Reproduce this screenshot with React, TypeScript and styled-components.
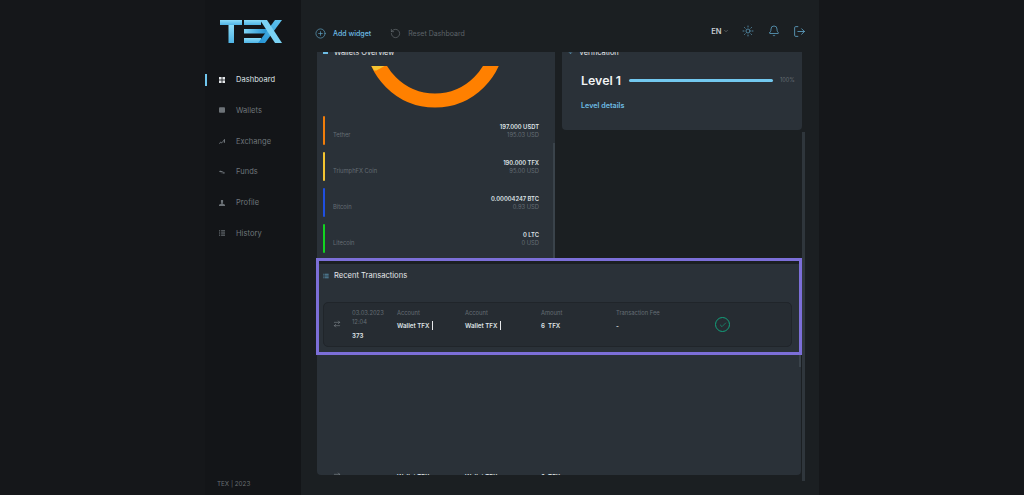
import React from 'react';
import styled, { createGlobalStyle } from 'styled-components';
import { Bell, ChevronDown, CirclePlus, LogOut, RotateCcw, Sun, List, ArrowRightLeft, Check, ChevronsDown } from 'lucide-react';

const GlobalStyle = createGlobalStyle`
  html, body { margin: 0; padding: 0; background: #15171a; }
  body { font-family: Inter, "Liberation Sans", sans-serif; overflow: hidden; }
  * { box-sizing: border-box; }
`;

const Page = styled.div`
  width: 1024px;
  height: 495px;
  padding-left: 205px;
  display: flex;
  background: #15171a;
  overflow: hidden;
`;

const Sidebar = styled.aside`
  width: 96px;
  height: 495px;
  display: flex;
  flex-direction: column;
  background: #131518;
`;

const LogoWrap = styled.div`
  height: 73.5px;
  padding: 20px 0 0 15px;
`;

const Nav = styled.nav`
  display: flex;
  flex-direction: column;
`;

const NavItem = styled.div<{ $active?: boolean }>`
  height: 12px;
  margin-bottom: 18.8px;
  padding-left: 12px;
  display: flex;
  align-items: center;
  gap: 11px;
  font-size: 7.5px;
  letter-spacing: 0.05px;
  color: ${({ $active }) => ($active ? '#dfe3e6' : '#6f757b')};
  border-left: 2px solid ${({ $active }) => ($active ? '#6fc6ee' : 'transparent')};
`;

const NavGlyph = styled.svg<{ $active?: boolean }>`
  width: 6px;
  height: 6px;
  flex: none;
  fill: ${({ $active }) => ($active ? '#e4e7ea' : '#6d7378')};
`;

const Copyright = styled.div`
  margin-top: auto;
  padding: 0 0 7px 12px;
  font-size: 6.3px;
  line-height: 8px;
  color: #686e73;
`;

const Main = styled.main`
  position: relative;
  width: 518px;
  height: 495px;
  display: flex;
  flex-direction: column;
  background: #1b1f22;
`;

const TopBar = styled.header`
  height: 52px;
  flex: none;
  padding: 14px 13px 0 14px;
  display: flex;
  align-items: center;
`;

const TopAction = styled.div<{ $muted?: boolean }>`
  display: flex;
  align-items: center;
  gap: 7px;
  margin-right: 19px;
  font-size: 7px;
  font-weight: ${({ $muted }) => ($muted ? 400 : 500)};
  color: ${({ $muted }) => ($muted ? '#5d6369' : '#6dbce4')};
  svg { color: ${({ $muted }) => ($muted ? '#6a7075' : '#62a9cd')}; }
`;

const TopRight = styled.div`
  margin-left: auto;
  display: flex;
  align-items: center;
  gap: 13.5px;
  padding-bottom: 4px;
  svg { color: #62a9cd; }
`;

const Lang = styled.div`
  display: flex;
  align-items: center;
  gap: 1px;
  font-size: 7.6px;
  font-weight: 600;
  color: #c8cdd1;
  svg { color: #8a9095; }
`;

const Viewport = styled.div`
  width: 485px;
  height: 423px;
  margin-left: 16px;
  flex: none;
  display: flex;
  flex-direction: column;
  overflow: hidden;
`;

const Columns = styled.div`
  display: flex;
  align-items: flex-start;
  gap: 7px;
`;

const Panel = styled.section<{ $width: number; $height: number; $bottomRadius?: boolean }>`
  position: relative;
  width: ${({ $width }) => $width}px;
  height: ${({ $height }) => $height}px;
  flex: none;
  padding: 0 6px;
  background: #2a3138;
  overflow: hidden;
  border-radius: ${({ $bottomRadius }) => ($bottomRadius ? '0 0 4px 4px' : '0')};
`;

const ClippedTitle = styled.div`
  display: flex;
  align-items: center;
  gap: 6px;
  height: 10px;
  margin-top: -5px;
  font-size: 7.4px;
  color: #e8eaec;
  svg { color: #6dbce4; flex: none; }
`;

const TitleMark = styled.span`
  width: 5px;
  height: 3px;
  flex: none;
  margin-top: 1px;
  background: #6dbce4;
`;

const ChartWrap = styled.div`
  margin: 9px 0 8px 41.5px;
  height: 42px;
`;

const WalletList = styled.div`
  display: flex;
  flex-direction: column;
  gap: 7px;
`;

const WalletRow = styled.div`
  height: 29px;
  display: flex;
  align-items: flex-start;
  padding-right: 10px;
`;

const Accent = styled.span<{ $color: string }>`
  width: 2px;
  height: 29px;
  flex: none;
  border-radius: 1px;
  margin-right: 8px;
  background: ${({ $color }) => $color};
`;

const WalletName = styled.div`
  margin-top: 15px;
  font-size: 5.8px;
  line-height: 8px;
  color: #656d74;
`;

const WalletValues = styled.div`
  margin-left: auto;
  padding-top: 6.5px;
  text-align: right;
  font-size: 5.8px;
  line-height: 8.5px;
  color: #656d74;
`;

const WalletAmount = styled.div`
  font-weight: 600;
  color: #dfe3e6;
`;

const PanelScrollbar = styled.span`
  position: absolute;
  right: 0;
  top: 91px;
  bottom: 0;
  width: 2px;
  background: #3a434b;
`;

const LevelRow = styled.div`
  display: flex;
  align-items: center;
  margin: 14px 0 0 13px;
  height: 18px;
`;

const LevelName = styled.div`
  width: 48px;
  font-size: 12.4px;
  font-weight: 600;
  color: #f1f3f4;
`;

const ProgressTrack = styled.div`
  width: 144px;
  height: 3px;
  border-radius: 2px;
  background: #72c8ef;
`;

const ProgressLabel = styled.div`
  margin-left: 7px;
  font-size: 5.6px;
  color: #656d74;
`;

const LevelLink = styled.div`
  margin: 12px 0 0 13px;
  font-size: 7.2px;
  font-weight: 600;
  color: #6dbce4;
`;

const RecentPanel = styled.section`
  position: relative;
  width: 484px;
  height: 211px;
  flex: none;
  margin-top: 6px;
  padding: 0 9px 0 6px;
  background: #2a3138;
  border-radius: 0 0 4px 4px;
  overflow: hidden;
`;

const RecentScrollbar = styled.span`
  position: absolute;
  right: 0;
  top: 0;
  width: 2px;
  height: 103px;
  background: #3a434b;
`;

const RecentTitle = styled.div`
  height: 11px;
  margin-top: 6px;
  display: flex;
  align-items: center;
  gap: 5px;
  font-size: 7.6px;
  color: #e4e7ea;
  svg { color: #6dbce4; flex: none; }
`;

const TxRow = styled.div`
  height: 45px;
  margin-top: 21px;
  border: 1px solid #20252a;
  border-radius: 5px;
  background: #262c32;
  display: flex;
  align-items: flex-start;
  padding: 6px 0 0 9px;
`;

const GhostRow = styled.div`
  height: 10px;
  margin-top: 125px;
  display: flex;
  align-items: flex-start;
  padding-left: 10px;
`;

const TxIcon = styled.div`
  width: 19px;
  flex: none;
  margin-top: 11px;
  color: #8a9197;
  svg { display: block; }
`;

const GhostIcon = styled(TxIcon)`
  margin-top: 0;
`;

const TxCol = styled.div<{ $width: number }>`
  width: ${({ $width }) => $width}px;
  flex: none;
  display: flex;
  flex-direction: column;
`;

const TxLabel = styled.div`
  font-size: 5.8px;
  line-height: 8.5px;
  color: #656d74;
`;

const TxValue = styled.div`
  display: flex;
  align-items: center;
  gap: 2.5px;
  margin-top: 3px;
  font-size: 6.2px;
  line-height: 9px;
  font-weight: 600;
  color: #dfe3e6;
`;

const TxNumber = styled(TxValue)`
  margin-top: 5px;
`;

const GhostValue = styled(TxValue)`
  margin-top: 0;
`;

const Caret = styled.span`
  width: 1px;
  height: 9px;
  background: #e6e8ea;
`;

const StatusRing = styled.div`
  width: 15px;
  height: 15px;
  margin-top: 8px;
  border-radius: 50%;
  border: 1px solid #12a17c;
  color: #12a17c;
  display: flex;
  align-items: center;
  justify-content: center;
`;

const MainScrollTrack = styled.span`
  position: absolute;
  left: 501px;
  top: 132px;
  width: 3px;
  height: 349px;
  background: #2f363c;
`;

const Highlight = styled.div`
  position: absolute;
  left: 15px;
  top: 258px;
  width: 486px;
  height: 97px;
  border: 3px solid #7c6fd8;
  pointer-events: none;
`;

const Logo = () => (
  <svg width="62" height="23" viewBox="0 0 62 23">
    <defs>
      <linearGradient id="texLight" x1="0" y1="0" x2="0" y2="1">
        <stop offset="0" stopColor="#8bdcf8" />
        <stop offset="1" stopColor="#4fb4e6" />
      </linearGradient>
      <linearGradient id="texCut" x1="0" y1="0" x2="1" y2="0">
        <stop offset="0" stopColor="#7fd4f5" />
        <stop offset="1" stopColor="#1f8fd0" />
      </linearGradient>
      <linearGradient id="texStroke" x1="1" y1="0" x2="0" y2="1">
        <stop offset="0" stopColor="#63c6f0" />
        <stop offset="1" stopColor="#2392d4" />
      </linearGradient>
    </defs>
    <rect x="0" y="0" width="22" height="5" fill="url(#texLight)" />
    <rect x="8.5" y="5" width="5.5" height="18" fill="url(#texLight)" />
    <rect x="24" y="0" width="17" height="5" fill="url(#texLight)" />
    <rect x="24" y="9" width="24" height="4.5" fill="url(#texCut)" />
    <rect x="24" y="18" width="17" height="5" fill="url(#texLight)" />
    <polygon points="55,0 62,0 45,23 38,23" fill="url(#texStroke)" />
    <polygon points="40,0 47,0 62,23 55,23" fill="#7ad2f4" />
  </svg>
);

const Gauge = () => (
  <svg width="140" height="42" viewBox="0 0 140 42">
    <circle cx="70" cy="-27.8" r="62.3" fill="none" stroke="#ff8000" strokeWidth="14" />
    <polygon points="6.5,0 19.5,0 11.5,4.4 9,4.6" fill="#f6c431" />
  </svg>
);

const navItems: { label: string; active?: boolean; glyph: React.ReactNode }[] = [
  {
    label: 'Dashboard',
    active: true,
    glyph: (
      <>
        <rect x="0" y="0" width="4.3" height="4.3" />
        <rect x="5.7" y="0" width="4.3" height="4.3" />
        <rect x="0" y="5.7" width="4.3" height="4.3" />
        <rect x="5.7" y="5.7" width="4.3" height="4.3" />
      </>
    ),
  },
  { label: 'Wallets', glyph: <rect x="0" y="0.5" width="10" height="9" rx="1.5" /> },
  { label: 'Exchange', glyph: <path d="M0 9l3-3 1.5 1.5L9 1.5 10 2v6H8V4.5L4.5 9 3 7.5 1 10z" /> },
  { label: 'Funds', glyph: <path d="M0 4l2.5-2v1.5H6v1.4H2.5V6zM10 6.5L7.5 8.5V7H4V5.8h3.5V4.3z" /> },
  { label: 'Profile', glyph: <path d="M3.2 0h3.6v4.5H6V6l4 2v2H0V8l4-2V4.5H3.2z" /> },
  {
    label: 'History',
    glyph: (
      <>
        <rect x="0" y="0.5" width="2" height="1.8" />
        <rect x="3.5" y="0.5" width="6.5" height="1.8" />
        <rect x="0" y="4.1" width="2" height="1.8" />
        <rect x="3.5" y="4.1" width="6.5" height="1.8" />
        <rect x="0" y="7.7" width="2" height="1.8" />
        <rect x="3.5" y="7.7" width="6.5" height="1.8" />
      </>
    ),
  },
];

const wallets = [
  { name: 'Tether', amount: '197.000 USDT', usd: '195.03 USD', color: '#f07d0a' },
  { name: 'TriumphFX Coin', amount: '190.000 TFX', usd: '95.00 USD', color: '#f4c430' },
  { name: 'Bitcoin', amount: '0.00004247 BTC', usd: '0.93 USD', color: '#1f4fe0' },
  { name: 'Litecoin', amount: '0 LTC', usd: '0 USD', color: '#12d321' },
];

const App = () => (
  <Page>
    <GlobalStyle />
    <Sidebar>
      <LogoWrap>
        <Logo />
      </LogoWrap>
      <Nav>
        {navItems.map((item) => (
          <NavItem key={item.label} $active={item.active}>
            <NavGlyph viewBox="0 0 10 10" $active={item.active}>
              {item.glyph}
            </NavGlyph>
            {item.label}
          </NavItem>
        ))}
      </Nav>
      <Copyright>TEX | 2023</Copyright>
    </Sidebar>
    <Main>
      <TopBar>
        <TopAction>
          <CirclePlus size={11} strokeWidth={1.4} />
          Add widget
        </TopAction>
        <TopAction $muted>
          <RotateCcw size={11} strokeWidth={1.4} />
          Reset Dashboard
        </TopAction>
        <TopRight>
          <Lang>
            EN
            <ChevronDown size={6} strokeWidth={2} />
          </Lang>
          <Sun size={12} strokeWidth={1.4} />
          <Bell size={12} strokeWidth={1.5} />
          <LogOut size={13} strokeWidth={1.5} />
        </TopRight>
      </TopBar>
      <Viewport>
        <Columns>
          <Panel $width={238} $height={206}>
            <ClippedTitle>
              <TitleMark />
              Wallets Overview
            </ClippedTitle>
            <ChartWrap>
              <Gauge />
            </ChartWrap>
            <WalletList>
              {wallets.map((wallet) => (
                <WalletRow key={wallet.name}>
                  <Accent $color={wallet.color} />
                  <WalletName>{wallet.name}</WalletName>
                  <WalletValues>
                    <WalletAmount>{wallet.amount}</WalletAmount>
                    {wallet.usd}
                  </WalletValues>
                </WalletRow>
              ))}
            </WalletList>
            <PanelScrollbar />
          </Panel>
          <Panel $width={240} $height={78} $bottomRadius>
            <ClippedTitle>
              <ChevronsDown size={5} strokeWidth={3} />
              Verification
            </ClippedTitle>
            <LevelRow>
              <LevelName>Level 1</LevelName>
              <ProgressTrack />
              <ProgressLabel>100%</ProgressLabel>
            </LevelRow>
            <LevelLink>Level details</LevelLink>
          </Panel>
        </Columns>
        <RecentPanel>
          <RecentTitle>
            <List size={6} strokeWidth={2.5} />
            Recent Transactions
          </RecentTitle>
          <TxRow>
            <TxIcon>
              <ArrowRightLeft size={8} strokeWidth={1.6} />
            </TxIcon>
            <TxCol $width={45}>
              <TxLabel>03.03.2023</TxLabel>
              <TxLabel>12:04</TxLabel>
              <TxNumber>373</TxNumber>
            </TxCol>
            <TxCol $width={68}>
              <TxLabel>Account</TxLabel>
              <TxValue>
                Wallet TFX <Caret />
              </TxValue>
            </TxCol>
            <TxCol $width={76}>
              <TxLabel>Account</TxLabel>
              <TxValue>
                Wallet TFX <Caret />
              </TxValue>
            </TxCol>
            <TxCol $width={75}>
              <TxLabel>Amount</TxLabel>
              <TxValue>6&nbsp;&nbsp;TFX</TxValue>
            </TxCol>
            <TxCol $width={99}>
              <TxLabel>Transaction Fee</TxLabel>
              <TxValue>-</TxValue>
            </TxCol>
            <StatusRing>
              <Check size={8} strokeWidth={2} />
            </StatusRing>
          </TxRow>
          <GhostRow>
            <GhostIcon>
              <ArrowRightLeft size={8} strokeWidth={1.6} />
            </GhostIcon>
            <TxCol $width={45} />
            <TxCol $width={68}>
              <GhostValue>Wallet TFX</GhostValue>
            </TxCol>
            <TxCol $width={76}>
              <GhostValue>Wallet TFX</GhostValue>
            </TxCol>
            <TxCol $width={75}>
              <GhostValue>6&nbsp;&nbsp;TFX</GhostValue>
            </TxCol>
          </GhostRow>
          <RecentScrollbar />
        </RecentPanel>
      </Viewport>
      <MainScrollTrack />
      <Highlight />
    </Main>
  </Page>
);

export default App;
